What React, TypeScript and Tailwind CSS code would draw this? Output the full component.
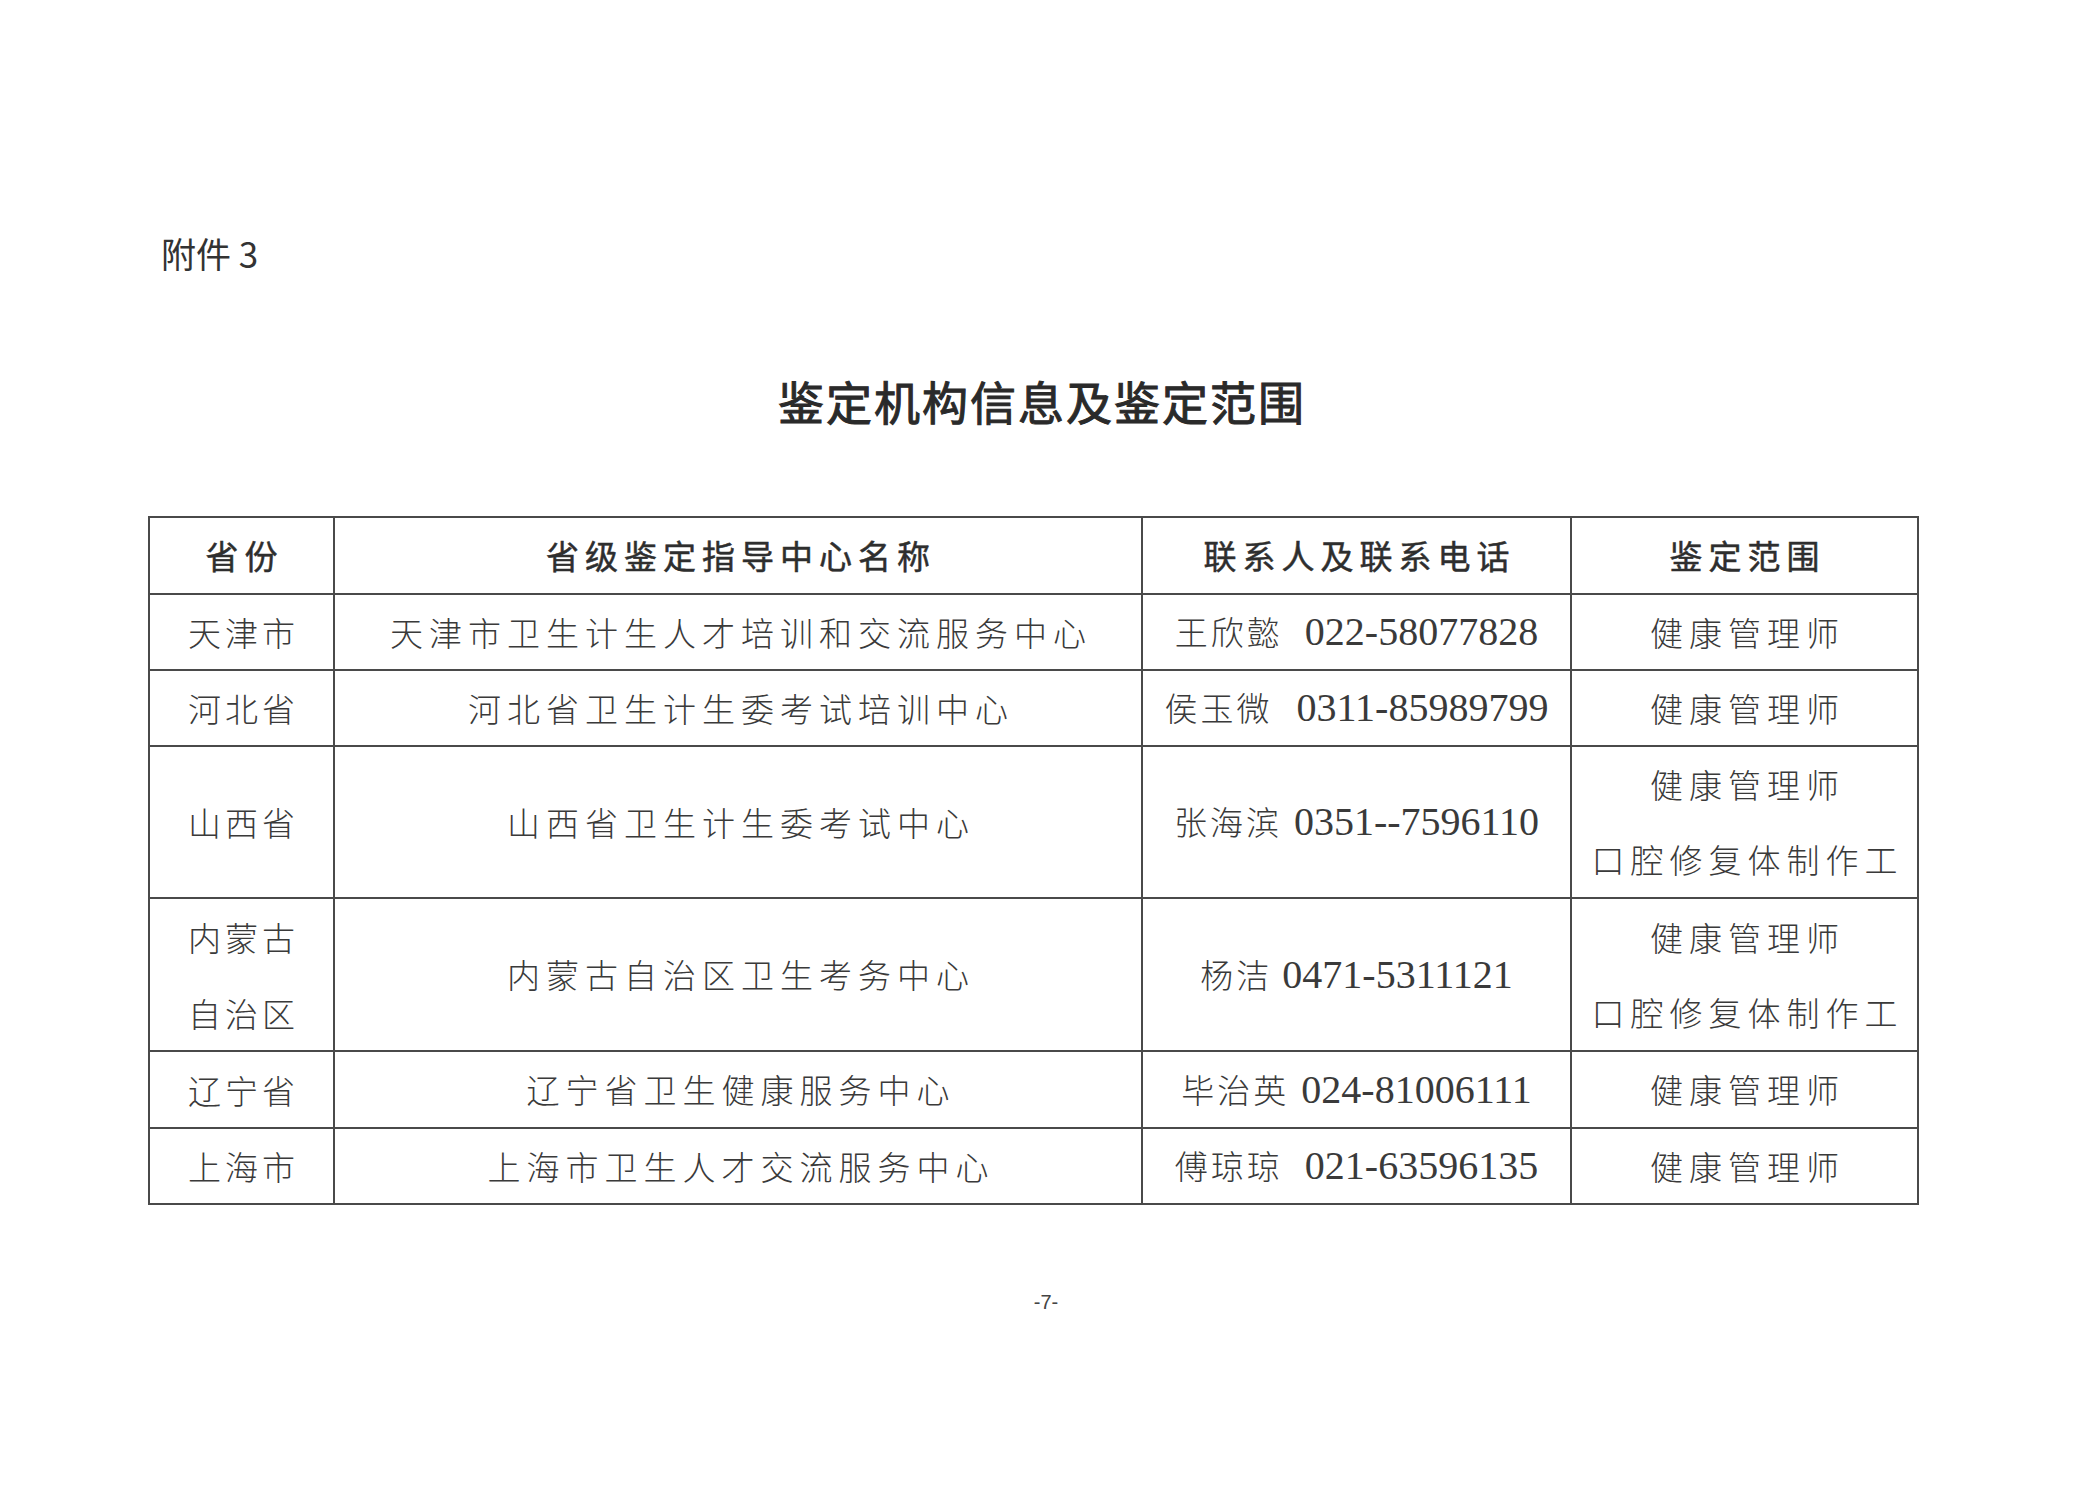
import React from "react";

const CJK = { fontFamily: '"Noto Sans CJK SC", "Noto Sans", sans-serif' };

type Row = {
  prov: string[];
  org: string;
  name: string;
  tel: string;
  scope: string[];
  h: string;
  gap: string;
};

const rows: Row[] = [
  { prov: ["天津市"], org: "天津市卫生计生人才培训和交流服务中心", name: "王欣懿", tel: "022-58077828", scope: ["健康管理师"], h: "h-[76px]", gap: "ml-[22px]" },
  { prov: ["河北省"], org: "河北省卫生计生委考试培训中心", name: "侯玉微", tel: "0311-85989799", scope: ["健康管理师"], h: "h-[76px]", gap: "ml-[24px]" },
  { prov: ["山西省"], org: "山西省卫生计生委考试中心", name: "张海滨", tel: "0351--7596110", scope: ["健康管理师", "口腔修复体制作工"], h: "h-[152px]", gap: "ml-[12px]" },
  { prov: ["内蒙古", "自治区"], org: "内蒙古自治区卫生考务中心", name: "杨洁", tel: "0471-5311121", scope: ["健康管理师", "口腔修复体制作工"], h: "h-[153px]", gap: "ml-[10px]" },
  { prov: ["辽宁省"], org: "辽宁省卫生健康服务中心", name: "毕治英", tel: "024-81006111", scope: ["健康管理师"], h: "h-[77px]", gap: "ml-[12px]" },
  { prov: ["上海市"], org: "上海市卫生人才交流服务中心", name: "傅琼琼", tel: "021-63596135", scope: ["健康管理师"], h: "h-[76px]", gap: "ml-[22px]" },
];

const cellBase =
  "flex flex-col items-center justify-center border-r-2 border-b-2 border-[#4a4a4a] overflow-hidden";

function Header() {
  const hd =
    "text-[33px] leading-none font-normal tracking-[6px] text-[#2e2e2e] pl-[6px] [-webkit-text-stroke:0.5px_#2e2e2e]";
  return (
    <div className="flex h-[77px]">
      <div className={`${cellBase} w-[185px]`}>
        <span className={hd} style={CJK}>省份</span>
      </div>
      <div className={`${cellBase} w-[808px]`}>
        <span className={hd} style={CJK}>省级鉴定指导中心名称</span>
      </div>
      <div className={`${cellBase} w-[429px]`}>
        <span className={hd} style={CJK}>联系人及联系电话</span>
      </div>
      <div className={`${cellBase} w-[347px]`}>
        <span className={hd} style={CJK}>鉴定范围</span>
      </div>
    </div>
  );
}

function BodyRow({ r }: { r: Row }) {
  return (
    <div className={`flex ${r.h}`}>
      <div className={`${cellBase} w-[185px]`}>
        {r.prov.map((p) => (
          <div key={p} className="leading-[76px] text-[33px] font-light tracking-[4px] pl-[4px] text-[#3a3a3a]" style={CJK}>
            {p}
          </div>
        ))}
      </div>
      <div className={`${cellBase} w-[808px]`}>
        <div className="leading-none text-[33px] font-light tracking-[6px] pl-[6px] text-[#3a3a3a]" style={CJK}>
          {r.org}
        </div>
      </div>
      <div className={`${cellBase} w-[429px]`}>
        <div className="flex items-baseline whitespace-nowrap text-[#3a3a3a]">
          <span className="text-[33px] font-light tracking-[3px]" style={CJK}>
            {r.name}
          </span>
          <span
            className={`text-[40px] ${r.gap}`}
            style={{ fontFamily: '"Liberation Serif", "Times New Roman", serif' }}
          >
            {r.tel}
          </span>
        </div>
      </div>
      <div className={`${cellBase} w-[347px]`}>
        {r.scope.map((s) => (
          <div key={s} className="leading-[75px] text-[33px] font-light tracking-[6px] pl-[6px] text-[#3a3a3a]" style={CJK}>
            {s}
          </div>
        ))}
      </div>
    </div>
  );
}

export default function App() {
  return (
    <div className="w-[2073px] h-[1490px] bg-white overflow-hidden flex flex-col">
      <div className="mt-[235px] ml-[161px] text-[35px] leading-none text-[#333]" style={CJK}>
        附件 3
      </div>
      <div className="mt-[107px] flex justify-center pl-[11px]">
        <div
          className="text-[46px] leading-none font-normal tracking-[2px] text-[#2a2a2a] [-webkit-text-stroke:1px_#2a2a2a]"
          style={CJK}
        >
          鉴定机构信息及鉴定范围
        </div>
      </div>
      <div className="mt-[93px] ml-[148px] w-[1771px] border-l-2 border-t-2 border-[#4a4a4a] flex flex-col">
        <Header />
        {rows.map((r) => (
          <BodyRow key={r.org} r={r} />
        ))}
      </div>
      <div className="mt-[87px] flex justify-center pl-[19px]">
        <div
          className="text-[20px] leading-none text-[#444]"
          style={{ fontFamily: '"Liberation Sans", Arial, sans-serif' }}
        >
          -7-
        </div>
      </div>
    </div>
  );
}
